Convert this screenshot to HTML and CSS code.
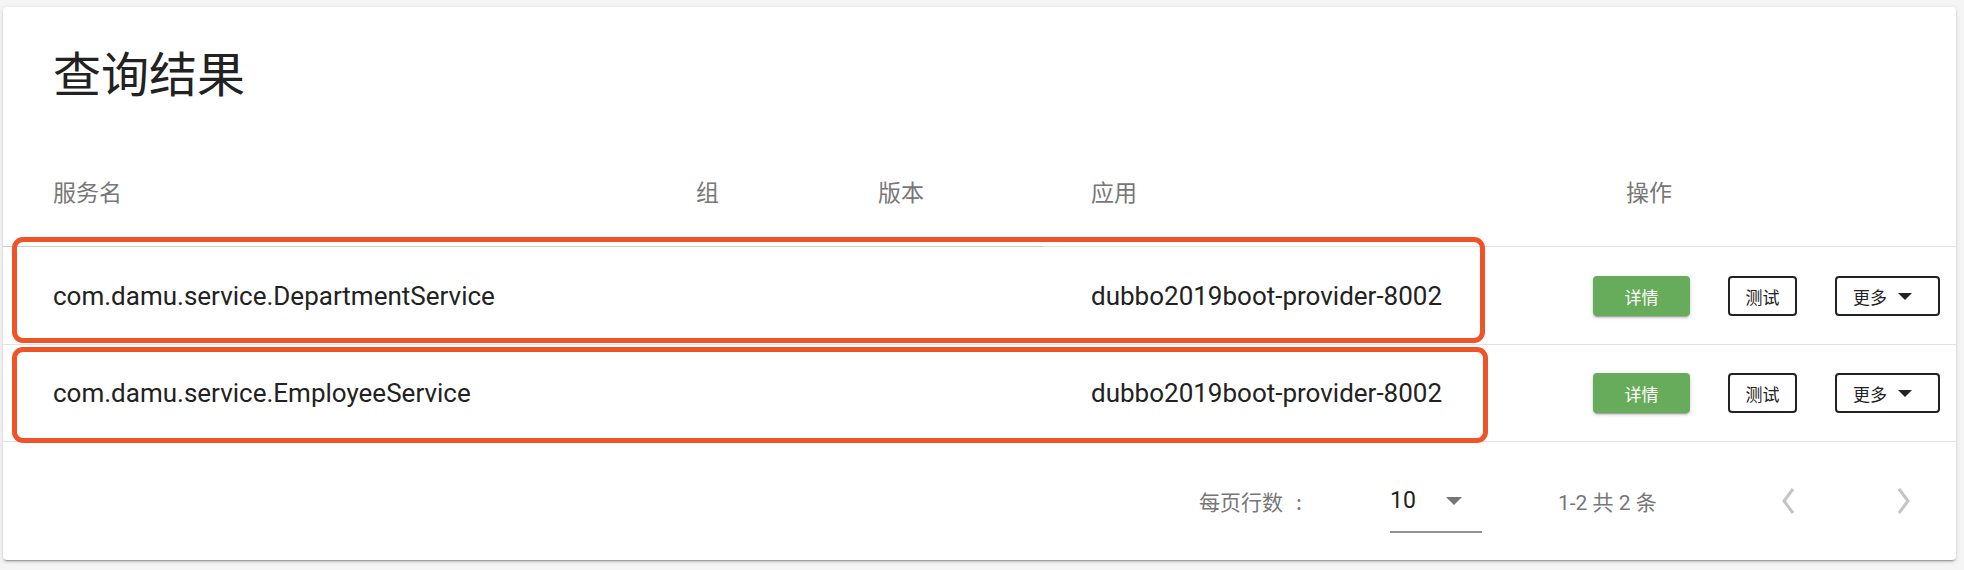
FILE: index.html
```html
<!DOCTYPE html>
<html lang="zh-CN">
<head>
<meta charset="utf-8">
<title>查询结果</title>
<link rel="stylesheet" href="styles.css">
</head>
<body>
<div class="page">
  <div class="card">
    <h1 class="title">查询结果</h1>
    <div class="table">
      <div class="row head">
        <div class="cell">服务名</div>
        <div class="cell">组</div>
        <div class="cell">版本</div>
        <div class="cell">应用</div>
        <div class="cell ops-head">操作</div>
      </div>
      <div class="row body">
        <div class="cell">com.damu.service.DepartmentService</div>
        <div class="cell"></div>
        <div class="cell"></div>
        <div class="cell">dubbo2019boot-provider-8002</div>
        <div class="cell ops">
          <button class="btn btn-green">详情</button>
          <button class="btn btn-outline btn-test">测试</button>
          <button class="btn btn-outline btn-more">更多<span class="caret"></span></button>
        </div>
      </div>
      <div class="row body">
        <div class="cell">com.damu.service.EmployeeService</div>
        <div class="cell"></div>
        <div class="cell"></div>
        <div class="cell">dubbo2019boot-provider-8002</div>
        <div class="cell ops">
          <button class="btn btn-green">详情</button>
          <button class="btn btn-outline btn-test">测试</button>
          <button class="btn btn-outline btn-more">更多<span class="caret"></span></button>
        </div>
      </div>
    </div>
    <div class="footer">
      <span class="rpp-label">每页行数<span class="colon">:</span></span>
      <div class="select">
        <span class="select-value">10</span>
        <span class="select-arrow"></span>
      </div>
      <span class="range">1-2 共 2 条</span>
      <button class="nav-btn nav-prev" aria-label="上一页">
        <svg width="16" height="26" viewBox="0 0 16 26"><path d="M13 1 L4 13 L13 25" fill="none" stroke="#c4c4c4" stroke-width="3"/></svg>
      </button>
      <button class="nav-btn" aria-label="下一页">
        <svg width="16" height="26" viewBox="0 0 16 26"><path d="M3 1 L12 13 L3 25" fill="none" stroke="#c4c4c4" stroke-width="3"/></svg>
      </button>
    </div>
  </div>
  <div class="mark mark-1"></div>
  <div class="mark mark-2"></div>
</div>
</body>
</html>
```
FILE: styles.css
```css
* { box-sizing: border-box; }
html, body { margin: 0; padding: 0; }
body {
  background: #f5f5f5;
  font-family: Roboto, "Noto Sans CJK SC", sans-serif;
  color: #212121;
}
.page {
  position: relative;
  padding: 7px 8px 10px 3px;
  height: 570px;
}
.card {
  background: #fff;
  border-radius: 4px;
  height: 553px;
  box-shadow: 0 3px 1px -2px rgba(0,0,0,.2), 0 2px 2px 0 rgba(0,0,0,.14), 0 1px 5px 0 rgba(0,0,0,.12);
  display: flex;
  flex-direction: column;
}
.title {
  margin: 0;
  padding: 40px 50px 40px;
  font-size: 48px;
  line-height: 48px;
  font-weight: 400;
  color: #222;
  font-family: "Noto Sans CJK SC", sans-serif;
}
.row {
  display: grid;
  grid-template-columns: 693px 182px 213px 502px 1fr;
  align-items: center;
  border-bottom: 1px solid #e2e2e2;
}
.cell { white-space: nowrap; }
.row > .cell:first-child { padding-left: 50px; }
.head {
  height: 113px;
  font-size: 23px;
  color: #777;
  font-family: "Noto Sans CJK SC", sans-serif;
  background: linear-gradient(to right, #cdcdcd 1040px, #e2e2e2 1040px) no-repeat bottom / 100% 1px;
  border-bottom: 1px solid transparent;
}
.ops-head { padding-left: 33px; }
.body {
  height: 97px;
  font-size: 26px;
  color: #222;
}
.ops {
  display: flex;
  align-items: center;
  gap: 38px;
}
.btn {
  height: 40px;
  font-family: "Noto Sans CJK SC", sans-serif;
  font-size: 17px;
  border-radius: 4px;
  padding: 0;
  display: inline-flex;
  align-items: center;
  justify-content: center;
  cursor: pointer;
}
.btn-green {
  width: 97px;
  background: #67ac5b;
  color: #fff;
  border: none;
  box-shadow: 0 3px 1px -2px rgba(0,0,0,.2), 0 2px 2px 0 rgba(0,0,0,.14), 0 1px 5px 0 rgba(0,0,0,.12);
}
.btn-outline {
  background: #fff;
  color: #222;
  border: 2px solid #222;
}
.btn-test { width: 69px; }
.btn-more { width: 105px; gap: 11px; justify-content: flex-start; padding-left: 16px; }
.caret {
  width: 0; height: 0;
  border-left: 7.5px solid transparent;
  border-right: 7.5px solid transparent;
  border-top: 7px solid #222;
}
.footer {
  flex: 1;
  display: flex;
  align-items: center;
  padding-left: 1196px;
  font-family: "Noto Sans CJK SC", sans-serif;
  color: #777;
  font-size: 21px;
}
.rpp-label { width: 191px; white-space: nowrap; }
.colon { margin-left: 13px; }
.select {
  width: 92px;
  display: flex;
  align-items: center;
  height: 47px;
  padding-bottom: 15px;
  border-bottom: 2px solid #949494;
  margin-top: 17px;
  margin-right: 76px;
}
.select-value {
  font-family: Roboto, sans-serif;
  color: #222;
  font-size: 23px;
  line-height: 30px;
}
.select-arrow {
  margin-left: 30px;
  width: 0; height: 0;
  border-left: 8px solid transparent;
  border-right: 8px solid transparent;
  border-top: 8px solid #757575;
}
.range { width: 222px; font-family: Roboto, "Noto Sans CJK SC", sans-serif; white-space: nowrap; }
.nav-btn {
  background: none;
  border: none;
  padding: 0;
  width: 16px;
  height: 26px;
  display: inline-flex;
}
.nav-prev { margin-right: 100px; }
.mark {
  position: absolute;
  border: 5px solid #ef5328;
  border-radius: 11px;
  pointer-events: none;
}
.mark-1 { left: 12px; top: 237px; width: 1473px; height: 106px; }
.mark-2 { left: 12px; top: 347px; width: 1476px; height: 96px; }
```
